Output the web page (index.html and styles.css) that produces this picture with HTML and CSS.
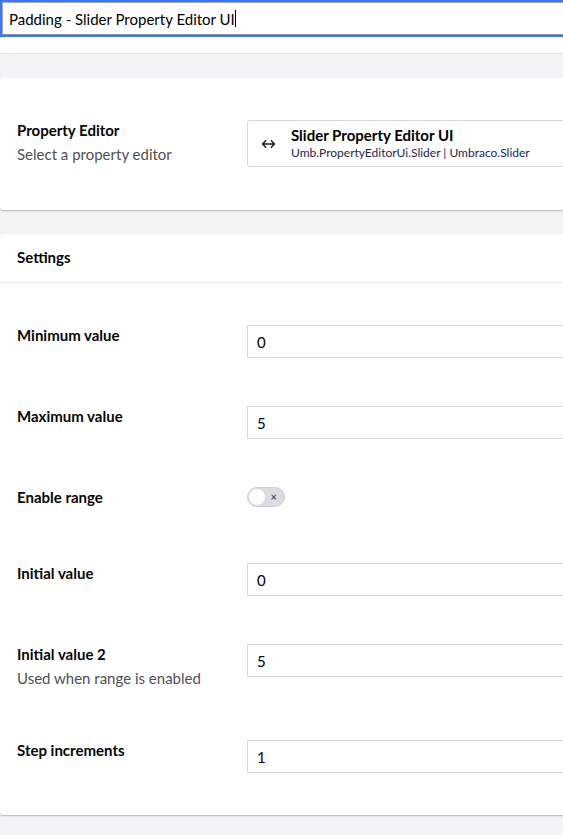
FILE: index.html
```html
<!DOCTYPE html>
<html lang="en">
<head>
    <meta charset="UTF-8">
    <meta name="viewport" content="width=device-width, initial-scale=1.0">
    <title>Padding - Slider Property Editor UI</title>
    <link rel="stylesheet" href="styles.css">
</head>
<body>
    <div class="title-bar">
        <div class="title-input">
            <span>Padding - Slider Property Editor UI</span><span class="caret"></span>
        </div>
    </div>
    <div class="workspace">
        <section class="box">
            <div class="box-content">
                <div class="property">
                    <div class="property-label">
                        <div class="label">Property Editor</div>
                        <div class="description">Select a property editor</div>
                    </div>
                    <div class="property-editor">
                        <div class="ref-node">
                            <svg class="ref-icon" width="15" height="10" viewBox="0 0 15 10">
                                <path d="M1.5 5h12M4.7 1.8 1.5 5l3.2 3.2M10.3 1.8 13.5 5l-3.2 3.2" fill="none" stroke="#1f1f1f" stroke-width="1.5" stroke-linecap="round" stroke-linejoin="round"/>
                            </svg>
                            <div class="ref-text">
                                <span class="ref-name">Slider Property Editor UI</span>
                                <span class="ref-alias">Umb.PropertyEditorUi.Slider | Umbraco.Slider</span>
                            </div>
                        </div>
                    </div>
                </div>
            </div>
        </section>

        <section class="box">
            <div class="box-header">Settings</div>
            <div class="box-content">
                <div class="property">
                    <div class="property-label">
                        <div class="label">Minimum value</div>
                    </div>
                    <div class="property-editor">
                        <div class="text-input">0</div>
                    </div>
                </div>
                <div class="property">
                    <div class="property-label">
                        <div class="label">Maximum value</div>
                    </div>
                    <div class="property-editor">
                        <div class="text-input">5</div>
                    </div>
                </div>
                <div class="property">
                    <div class="property-label">
                        <div class="label">Enable range</div>
                    </div>
                    <div class="property-editor">
                        <div class="toggle-wrap">
                            <div class="toggle">
                                <span class="knob"></span>
                                <span class="cross">&times;</span>
                            </div>
                        </div>
                    </div>
                </div>
                <div class="property">
                    <div class="property-label">
                        <div class="label">Initial value</div>
                    </div>
                    <div class="property-editor">
                        <div class="text-input">0</div>
                    </div>
                </div>
                <div class="property">
                    <div class="property-label">
                        <div class="label">Initial value 2</div>
                        <div class="description">Used when range is enabled</div>
                    </div>
                    <div class="property-editor">
                        <div class="text-input">5</div>
                    </div>
                </div>
                <div class="property">
                    <div class="property-label">
                        <div class="label">Step increments</div>
                    </div>
                    <div class="property-editor">
                        <div class="text-input">1</div>
                    </div>
                </div>
            </div>
        </section>
    </div>
</body>
</html>
```

FILE: styles.css
```css
* {
    margin: 0;
    padding: 0;
    box-sizing: border-box;
}
html, body {
    overflow: hidden;
}
body {
    font-family: Lato, "Noto Sans", sans-serif;
    font-size: 15px;
    line-height: 20px;
    color: #060606;
    background-color: #f3f3f5;
    min-width: 800px;
}

/* #region title */
.title-bar {
    background-color: #fff;
    padding: 2px 0 18px 2px;
}
.title-input {
    height: 33px;
    border: 1px solid #a9a9ab;
    border-bottom-color: #8f8f92;
    outline: 2px solid #3879ff;
    padding-left: 6px;
    font-size: 15px;
    display: flex;
    align-items: center;
    color: #000;
}
.caret {
    display: inline-block;
    width: 1px;
    height: 17px;
    background-color: #000;
}
/* #endregion title */

.workspace {
    border-top: 1px solid #e3e3e5;
    padding: 24px 0;
    display: flex;
    flex-direction: column;
    gap: 24px;
}
.box {
    background-color: #fff;
    border-radius: 3px;
    box-shadow: 0 1px 1px rgba(0, 0, 0, .18), 0 1px 3px rgba(0, 0, 0, .08);
}
.box-header {
    height: 49px;
    border-bottom: 1px solid #e9e9eb;
    padding: 0 17px 3px;
    display: flex;
    align-items: center;
    font-weight: 700;
}
.box-content {
    padding: 18px 17px;
}
.property {
    display: grid;
    grid-template-columns: 200px 1fr;
    column-gap: 30px;
    padding: 24px 0;
}
.label {
    font-weight: 700;
}
.description {
    color: #515054;
    line-height: 24px;
    margin-top: 2px;
    padding-bottom: 2px;
}

/* #region editors */
.text-input {
    height: 33px;
    border: 1px solid #d8d7d9;
    padding-left: 9px;
    display: flex;
    align-items: center;
    color: #000;
}
.ref-node {
    height: 47px;
    border: 1px solid #d8d7d9;
    border-radius: 3px;
    display: flex;
    align-items: center;
    padding-left: 13px;
}
.ref-icon {
    margin-right: 15px;
}
.ref-text {
    display: flex;
    flex-direction: column;
}
.ref-name {
    font-weight: 700;
    color: #000;
    line-height: 19px;
}
.ref-alias {
    font-size: 12px;
    line-height: 16px;
    color: #1b264f;
}
.toggle-wrap {
    height: 28px;
}
.toggle {
    position: relative;
    width: 38px;
    height: 20px;
    border-radius: 10px;
    background-color: #dcdce0;
    border: 1px solid #cfcfd3;
}
.toggle .knob {
    position: absolute;
    left: 1px;
    top: 1px;
    width: 16px;
    height: 16px;
    border-radius: 50%;
    background-color: #fff;
}
.toggle .cross {
    position: absolute;
    right: 7px;
    top: 0;
    font-size: 11px;
    line-height: 18px;
    color: #1b264f;
}
/* #endregion editors */
```
